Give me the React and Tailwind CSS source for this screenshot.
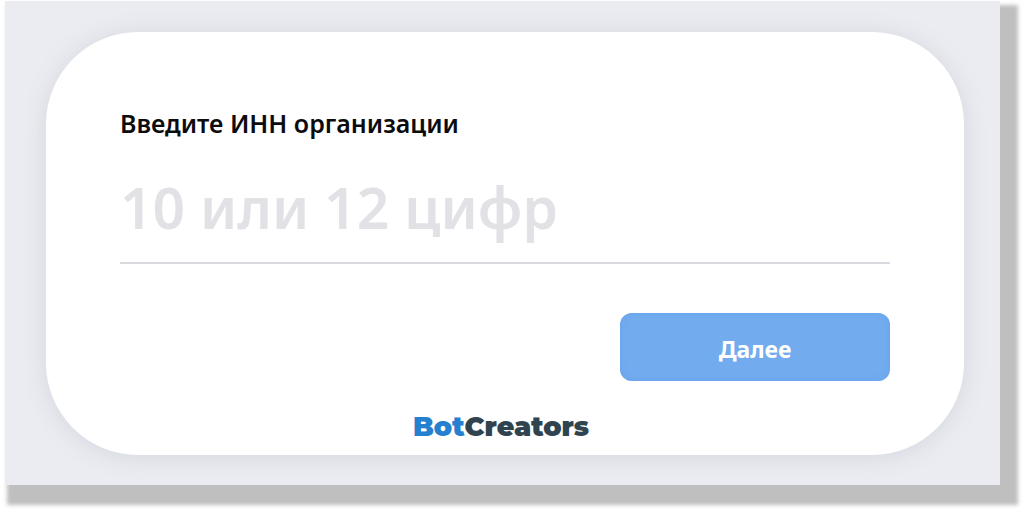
const Logo = () => (
  <div className="text-center font-['Montserrat','Inter',sans-serif] text-[27px] leading-8 font-black">
    <span className="text-[#2680d0]">Bot</span>
    <span className="text-[#2f444e]">Creators</span>
  </div>
);

const InnForm = () => (
  <form className="flex flex-col" onSubmit={(e) => e.preventDefault()}>
    <label htmlFor="inn" className="text-[25px] leading-8 font-semibold text-[#0c0c0e]">
      Введите ИНН организации
    </label>
    <input
      id="inn"
      type="text"
      inputMode="numeric"
      maxLength={12}
      placeholder="10 или 12 цифр"
      className="mt-[25px] h-[100px] w-full border-b-2 border-[#d9dae0] bg-transparent pb-3 text-[57px] font-semibold text-[#0c0c0e] outline-none placeholder:text-[#e2e2e6]"
    />
    <button
      type="submit"
      className="mt-[49px] h-[68px] w-[270px] self-end rounded-xl bg-[#72abee] pt-1 text-[23px] font-bold text-white shadow-[inset_0_0_6px_#67a2ea]"
    >
      Далее
    </button>
  </form>
);

export default function App() {
  return (
    <div className="bg-white pt-px pr-6 pb-7 pl-[5px] font-['Noto_Sans','Open_Sans',sans-serif]">
      <main className="bg-[#ebecf1] pt-[31px] pr-9 pb-[30px] pl-[41px] shadow-[10px_12px_4px_8px_#bfbfbf]">
        <section className="rounded-[92px] bg-white px-[74px] pt-[75px] pb-3 shadow-[0_2px_24px_#d3d6df]">
          <InnForm />
          <div className="mt-[30px] pr-2">
            <Logo />
          </div>
        </section>
      </main>
    </div>
  );
}
